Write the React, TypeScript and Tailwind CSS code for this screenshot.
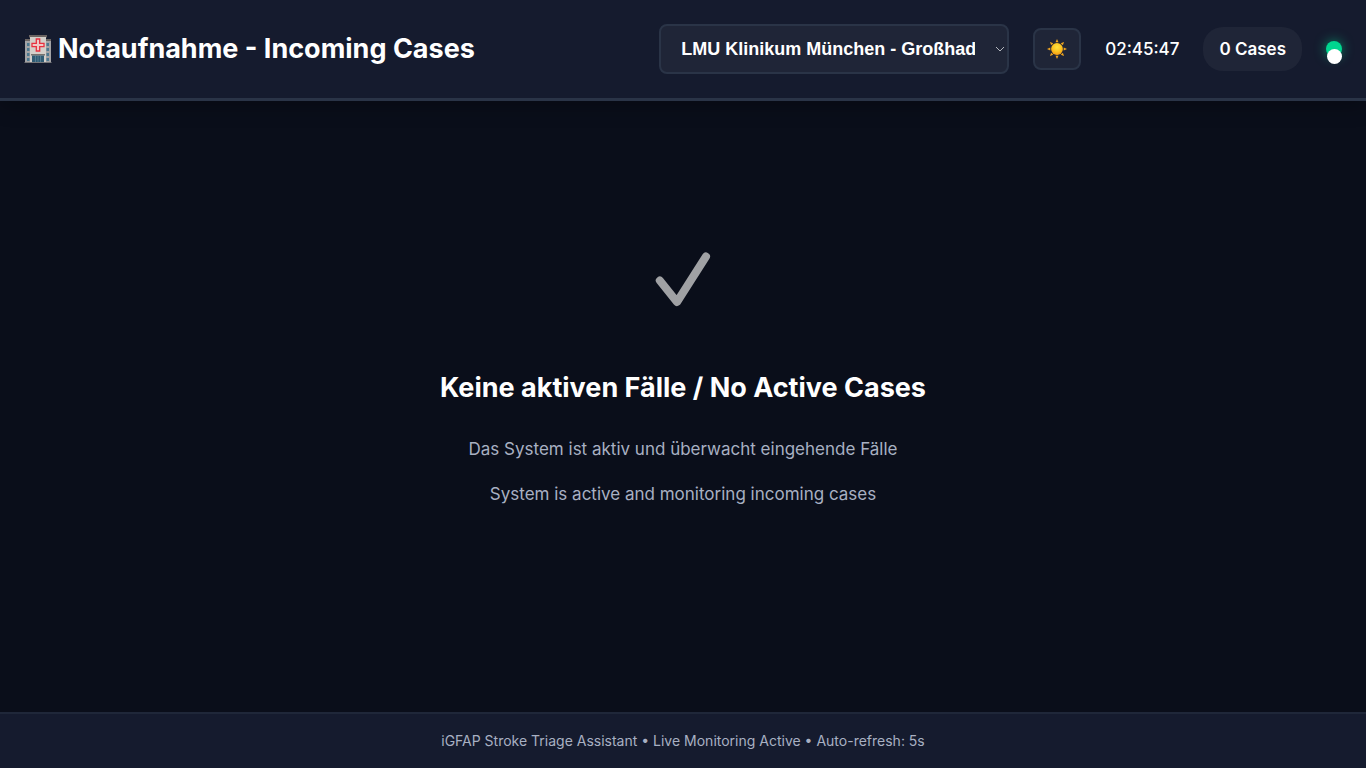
import { useState } from 'react';

const hospitals = ['LMU Klinikum München - Großhadern', 'Klinikum rechts der Isar', 'Charité Berlin'];

const sunRays = [0, 45, 90, 135, 180, 225, 270, 315];

function HospitalIcon() {
  return (
    <svg viewBox="0 0 28 30" className="h-[30px] w-7 shrink-0" aria-hidden="true">
      <rect x="1" y="6" width="26" height="23" fill="#a3a3a5" />
      <rect x="1" y="5" width="6" height="2" fill="#6b6462" />
      <rect x="21" y="5" width="6" height="2" fill="#6b6462" />
      <rect x="5" y="1" width="18" height="2.500" fill="#6b6462" />
      <rect x="6" y="3" width="16" height="26" fill="#d3cfca" />
      <g fill="#4b7890">
        <rect x="3" y="9" width="2.500" height="3" />
        <rect x="3" y="14" width="2.500" height="3" />
        <rect x="3" y="19" width="2.500" height="3" />
        <rect x="3" y="24" width="2.500" height="3" />
        <rect x="22.500" y="9" width="2.500" height="3" />
        <rect x="22.500" y="14" width="2.500" height="3" />
        <rect x="22.500" y="19" width="2.500" height="3" />
        <rect x="22.500" y="24" width="2.500" height="3" />
      </g>
      <path
        d="M12.300 5h3.400v4.300h4.300v3.400h-4.300v4.300h-3.400v-4.300h-4.300v-3.400h4.300z"
        fill="#f0c9c7"
        stroke="#e8303f"
        strokeWidth="1.300"
      />
      <rect x="7" y="20" width="14" height="1.500" fill="#77736f" />
      <rect x="8" y="21.500" width="12" height="7" fill="#2f5b73" />
      <path d="M11.500 22v7M14 22v7M16.500 22v7" stroke="#6d93a6" strokeWidth="0.600" />
      <rect x="0.500" y="28" width="27" height="1" fill="#77777a" />
    </svg>
  );
}

function SunIcon() {
  return (
    <svg viewBox="0 0 20 20" className="h-5 w-5" aria-hidden="true">
      <defs>
        <radialGradient id="sun" cx="50%" cy="35%" r="65%">
          <stop offset="0" stopColor="#ffe340" />
          <stop offset="0.600" stopColor="#fcc21f" />
          <stop offset="1" stopColor="#f39a14" />
        </radialGradient>
      </defs>
      {sunRays.map((angle) => (
        <path key={angle} d="M10 0l1.500 3.300h-3z" fill="#eea420" transform={`rotate(${angle} 10 10)`} />
      ))}
      <circle cx="10" cy="10" r="5.900" fill="url(#sun)" />
    </svg>
  );
}

export default function App() {
  const [hospital, setHospital] = useState(hospitals[0]);

  return (
    <div className="flex min-h-screen flex-col bg-[#0a0e1a] font-['Inter',sans-serif] text-white">
      <header className="relative flex items-center justify-between border-b-3 border-[#2a3447] bg-[#151b2e] p-6 shadow-[0_4px_20px_rgba(0,0,0,0.3)]">
        <h1 className="flex items-center gap-1.5 text-[27px] leading-9 font-bold">
          <HospitalIcon />
          Notaufnahme - Incoming Cases
        </h1>
        <div className="flex items-center gap-6">
          <div className="grid items-center">
            <select
              aria-label="Hospital"
              value={hospital}
              onChange={(event) => setHospital(event.target.value)}
              className="col-start-1 row-start-1 h-[50px] w-[350px] appearance-none rounded-lg border-2 border-[#2a3447] bg-[#1f2537] pr-8 pl-5 font-['Liberation_Sans',sans-serif] text-lg font-bold"
            >
              {hospitals.map((name) => (
                <option key={name}>{name}</option>
              ))}
            </select>
            <svg
              viewBox="0 0 10 6"
              className="pointer-events-none col-start-1 row-start-1 mr-1 h-1.5 w-2.5 justify-self-end"
              fill="none"
              stroke="#b4b7be"
              aria-hidden="true"
            >
              <path d="M1 1l4 4l4-4" />
            </svg>
          </div>
          <button
            type="button"
            aria-label="Toggle theme"
            className="flex h-[42px] w-12 items-center justify-center rounded-lg border-2 border-[#2a3447] bg-[#1f2537]"
          >
            <SunIcon />
          </button>
          <time className="text-[17px] leading-7 font-medium">02:45:47</time>
          <span className="rounded-[20px] bg-[#1f2537] px-4 py-2 text-[17px] leading-7 font-semibold">0 Cases</span>
          <span className="relative h-4 w-4 rounded-full bg-[#00d68f] shadow-[0_0_12px_#00d68f99]">
            <span className="absolute top-2 left-px size-[15px] rounded-full bg-white" />
          </span>
        </div>
      </header>

      <main className="flex grow flex-col items-center justify-center pb-[54px] text-center">
        <svg
          viewBox="0 0 56 56"
          className="mb-[58px] size-14"
          fill="none"
          stroke="#a0a1a4"
          strokeWidth="8"
          strokeLinecap="round"
          strokeLinejoin="round"
          aria-hidden="true"
        >
          <path d="M4.800 29.500L22 51L51 5.500" />
        </svg>
        <h2 className="mb-6 text-[27px] leading-[46px] font-bold">Keine aktiven Fälle / No Active Cases</h2>
        <p className="mb-4 text-[17px] leading-[29px] text-[#a8b0c2]">
          Das System ist aktiv und überwacht eingehende Fälle
        </p>
        <p className="text-[17px] leading-[29px] text-[#a8b0c2]">System is active and monitoring incoming cases</p>
      </main>

      <footer className="border-t-2 border-[#1f2739] bg-[#151b2e] px-6 py-4 text-center text-[14px] leading-[22px] text-[#a8b0c2]">
        iGFAP Stroke Triage Assistant • Live Monitoring Active • Auto-refresh: 5s
      </footer>
    </div>
  );
}
